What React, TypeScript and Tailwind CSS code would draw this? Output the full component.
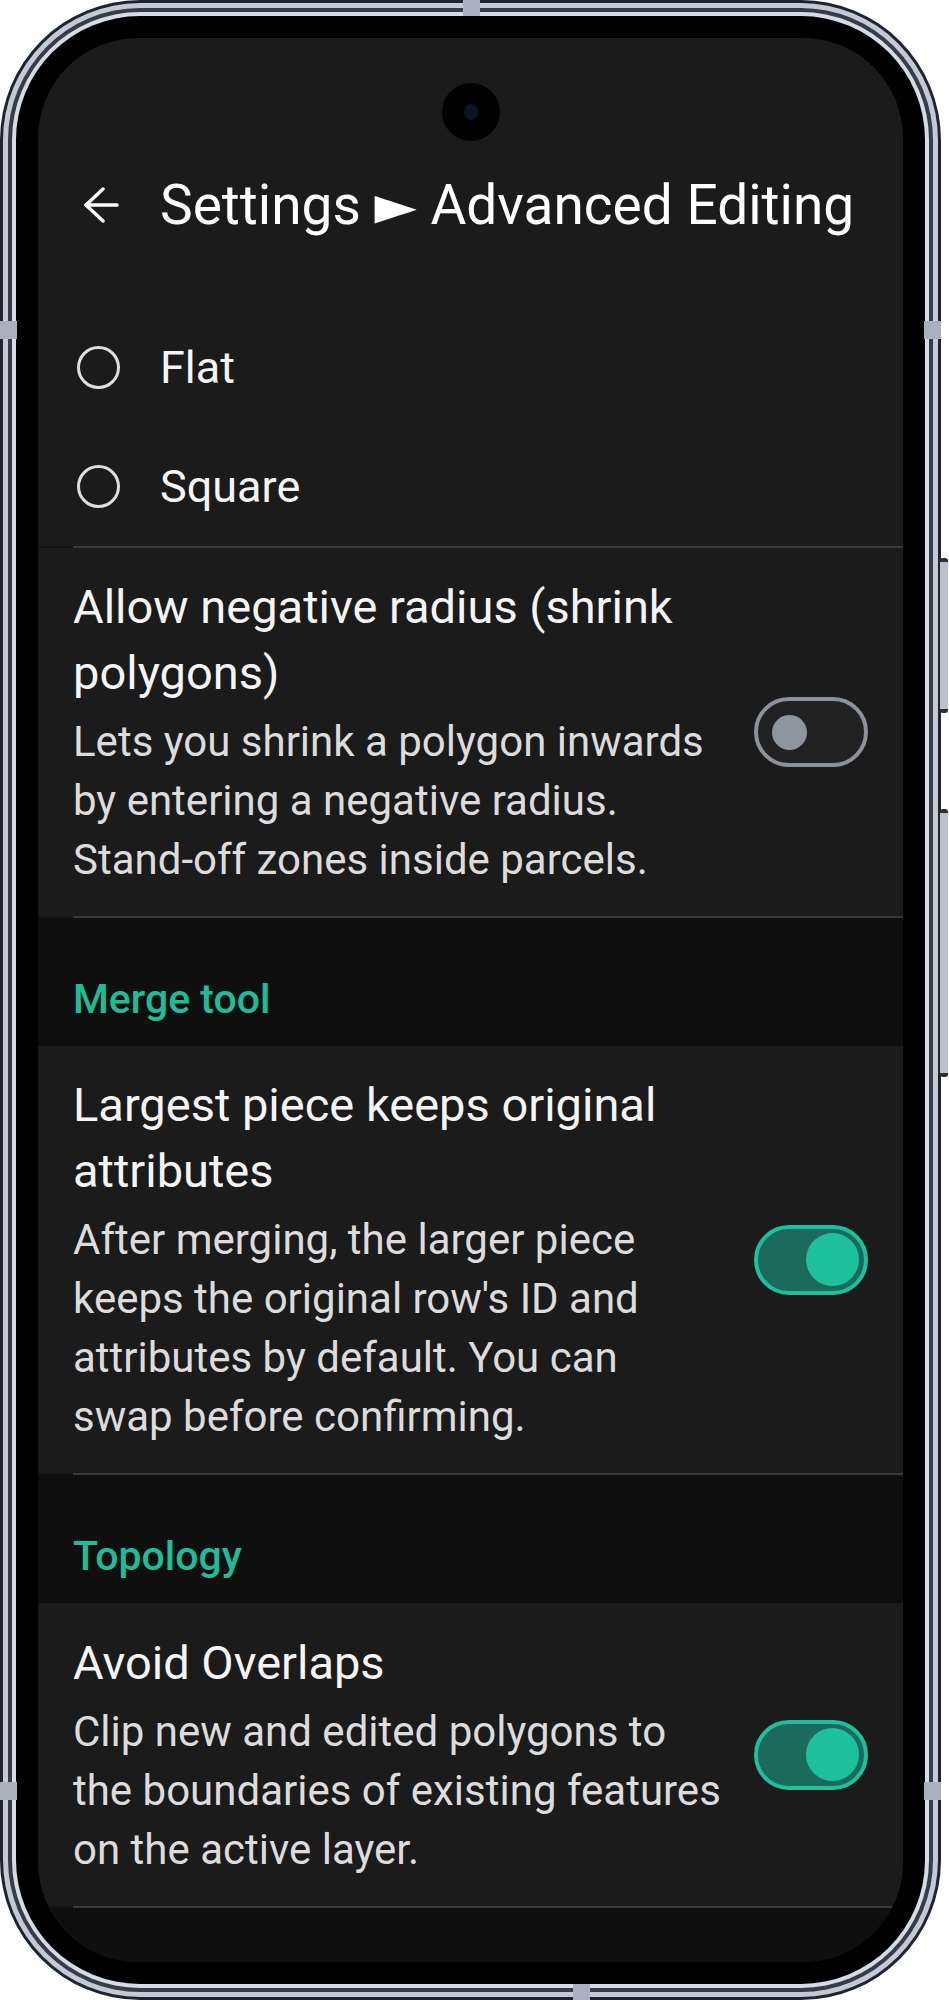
import React from "react";

type Pref = { title: string[]; desc: string[]; on: boolean };

const radius: Pref = {
  title: ["Allow negative radius (shrink", "polygons)"],
  desc: ["Lets you shrink a polygon inwards", "by entering a negative radius.", "Stand-off zones inside parcels."],
  on: false,
};
const merge: Pref = {
  title: ["Largest piece keeps original", "attributes"],
  desc: [
    "After merging, the larger piece",
    "keeps the original row's ID and",
    "attributes by default. You can",
    "swap before confirming.",
  ],
  on: true,
};
const overlaps: Pref = {
  title: ["Avoid Overlaps"],
  desc: ["Clip new and edited polygons to", "the boundaries of existing features", "on the active layer."],
  on: true,
};

function Toggle({ on }: { on: boolean }) {
  if (on) {
    return (
      <div className="w-[114px] h-[70px] rounded-full border-4 border-[#1fbf9b] bg-[#1b6b5c] flex items-center justify-end pr-[5px]">
        <div className="w-[53px] h-[53px] rounded-full bg-[#1fc09c]" />
      </div>
    );
  }
  return (
    <div className="w-[114px] h-[70px] rounded-full border-4 border-[#8c929b] bg-[#222222] flex items-center pl-[14px]">
      <div className="w-[35px] h-[35px] rounded-full bg-[#8f959e]" />
    </div>
  );
}

function Divider() {
  return (
    <div className="flex h-[2px] bg-[#141414]">
      <div className="w-[35px]" />
      <div className="flex-1 bg-[#3a3a3a]" />
    </div>
  );
}

function PrefRow({ p, pt = "pt-[26px]" }: { p: Pref; pt?: string }) {
  return (
    <div className="flex bg-[#1b1b1b] pl-[35px] pr-[35px]">
      <div className={`flex-1 ${pt} pb-[27px]`}>
        {p.title.map((t) => (
          <div key={t} className="text-[47px] leading-[66px] text-[#f4f4f4] whitespace-nowrap">
            {t}
          </div>
        ))}
        <div className="mt-[6px]">
          {p.desc.map((t) => (
            <div key={t} className="text-[42px] leading-[59px] text-[#dcdcdc] whitespace-nowrap">
              {t}
            </div>
          ))}
        </div>
      </div>
      <div className="flex items-center">
        <Toggle on={p.on} />
      </div>
    </div>
  );
}

function SectionHeader({ label }: { label: string }) {
  return (
    <div className="bg-[#0f0f0f] pl-[35px] pt-[57px] pb-[22px] text-[41px] leading-[49px] font-medium text-[#1dbd98]">
      {label}
    </div>
  );
}

function Radio({ label }: { label: string }) {
  return (
    <div className="h-[119px] flex items-center pl-[39px]">
      <div className="w-[43px] h-[43px] rounded-full border-[3.5px] border-[#dedede]" />
      <span className="ml-[40px] text-[45px] leading-[56px] text-[#f4f4f4]">{label}</span>
    </div>
  );
}

export default function App() {
  return (
    <div
      className="w-[949px] h-[2000px] bg-white relative"
      style={{ fontFamily: "Roboto, 'DejaVu Sans', sans-serif" }}
    >
      {/* phone body, metallic bands */}
      <div className="w-[941px] h-[2000px] rounded-[140px] bg-[#1f2530] p-[3px]">
        <div className="h-full rounded-[137px] bg-[#c3cad6] p-[5px]">
          <div className="h-full rounded-[132px] bg-[#363d49] p-[4px]">
            <div className="h-full rounded-[128px] bg-[#d6dce5] p-[4px]">
              <div className="h-full rounded-[124px] bg-black p-[22px]">
                <div className="h-full rounded-[100px] bg-[#1b1b1b] overflow-hidden relative flex flex-col">
                  {/* camera */}
                  <div className="absolute top-[45px] left-[404px] w-[58px] h-[58px] rounded-full bg-black flex items-center justify-center">
                    <div className="w-[14px] h-[16px] rounded-full bg-[#0c1428]" />
                  </div>

                  <div className="mt-[111px] h-[112px] flex items-center pl-[45px]">
                    <svg width="36" height="36" viewBox="0 0 36 36" fill="none" stroke="#ffffff" strokeWidth="3.4" strokeLinecap="round" strokeLinejoin="round">
                      <path d="M34 18H3" />
                      <path d="M20 2L3 18L20 34" />
                    </svg>
                    <div className="ml-[41px] text-[55px] leading-[64px] text-white whitespace-nowrap">
                      Settings ► Advanced Editing
                    </div>
                  </div>

                  <div className="mt-[47px]">
                    <Radio label="Flat" />
                    <Radio label="Square" />
                  </div>
                  <Divider />
                  <PrefRow p={radius} />
                  <Divider />
                  <SectionHeader label="Merge tool" />
                  <PrefRow p={merge} />
                  <Divider />
                  <SectionHeader label="Topology" />
                  <PrefRow p={overlaps} pt="pt-[27px]" />
                  <Divider />
                  <div className="flex-1 bg-[#0f0f0f]" />
                </div>
              </div>
            </div>
          </div>
        </div>
      </div>

      {/* antenna lines and side buttons */}
      <div className="absolute left-0 top-[321px] w-[17px] h-[18px] bg-[#a9b1be]" />
      <div className="absolute left-0 top-[1782px] w-[17px] h-[18px] bg-[#a9b1be]" />
      <div className="absolute left-[924px] top-[321px] w-[17px] h-[18px] bg-[#a9b1be]" />
      <div className="absolute left-[924px] top-[1782px] w-[17px] h-[18px] bg-[#a9b1be]" />
      <div className="absolute left-[463px] top-0 w-[17px] h-[16px] bg-[#a9b1be]" />
      <div className="absolute left-[573px] top-[1984px] w-[17px] h-[16px] bg-[#a9b1be]" />
      <div className="absolute left-[940px] top-[558px] w-[8px] h-[155px] rounded-[3px] bg-[#b9c1cd] border-y-4 border-[#2a303a]" />
      <div className="absolute left-[940px] top-[809px] w-[8px] h-[268px] rounded-[3px] bg-[#b9c1cd] border-y-4 border-[#2a303a]" />
    </div>
  );
}
